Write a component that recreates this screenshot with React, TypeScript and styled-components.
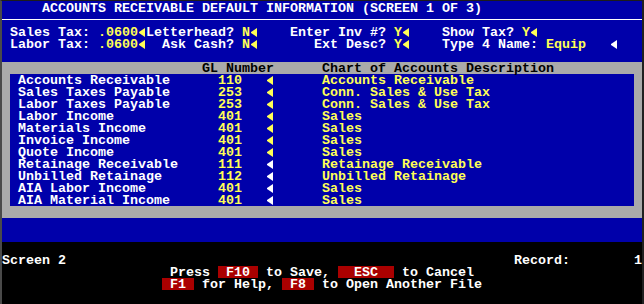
import React from 'react';
import styled, { createGlobalStyle } from 'styled-components';

// DOS text screen: 80 x 25 cells of 8 x 12 px
type Tone = 'white' | 'yellow' | 'black';

const tones: Record<Tone, string> = {
  white: '#ffffff',
  yellow: '#ffff55',
  black: '#000000',
};

const BLUE = '#0000aa';
const GRAY = '#aaaaaa';
const RED = '#aa0000';

const GlobalStyle = createGlobalStyle`
  html, body {
    margin: 0;
    padding: 0;
    background: #000;
  }
`;

const Frame = styled('div')`
  width: 644px;
  height: 304px;
  box-sizing: border-box;
  overflow: hidden;
  background: #000;
  border-top: 1px solid #1c1c1c;
  border-left: 2px solid #4a4a4a;
  border-right: 2px solid #202020;
  font-family: 'Liberation Mono', 'DejaVu Sans Mono', monospace;
  font-weight: bold;
  font-size: 13.333px;
  line-height: 12px;
  color: #fff;
`;

const Panel = styled('div')`
  background: ${BLUE};
  padding-top: 1px;
`;

const TextRow = styled('div')<{ $cols?: number; $bg?: string; $fg?: string }>`
  display: grid;
  grid-template-columns: repeat(${(p) => p.$cols ?? 80}, 8px);
  grid-template-rows: 12px;
  height: 12px;
  background: ${(p) => p.$bg ?? 'transparent'};
  color: ${(p) => p.$fg ?? '#fff'};
  white-space: pre;
`;

const Rule = styled('div')`
  height: 12px;
  position: relative;
  &::after {
    content: '';
    position: absolute;
    left: 0;
    right: 0;
    top: 5px;
    height: 1px;
    background: #fff;
  }
`;

const Blank = styled('div')<{ $rows?: number }>`
  height: ${(p) => (p.$rows ?? 1) * 12}px;
`;

const Txt = styled('span')<{ $at: number; $span: number; $tone?: Tone }>`
  grid-row: 1;
  grid-column: ${(p) => p.$at + 1} / span ${(p) => p.$span};
  padding-top: 1px;
  color: ${(p) => (p.$tone ? tones[p.$tone] : 'inherit')};
`;

const Arrow = styled('span')<{ $at: number; $tone?: Tone }>`
  grid-row: 1;
  grid-column: ${(p) => p.$at + 1} / span 1;
  align-self: start;
  justify-self: start;
  width: 0;
  height: 1px;
  margin: 2px 0 0 1px;
  border-top: 4px solid transparent;
  border-bottom: 4px solid transparent;
  border-right: 6px solid ${(p) => tones[p.$tone ?? 'white']};
`;

const KeyCap = styled('span')<{ $at: number; $span: number }>`
  grid-row: 1;
  grid-column: ${(p) => p.$at + 1} / span ${(p) => p.$span};
  padding-top: 1px;
  height: 11px;
  background: ${RED};
  color: #fff;
  text-align: center;
`;

const Table = styled('div')`
  background: ${GRAY};
`;

const TableBody = styled('div')`
  margin: 0 8px;
  background: ${BLUE};
`;

const TableFoot = styled('div')`
  height: 12px;
`;

const Status = styled('div')`
  background: #000;
`;

const T = ({ at, tone, children }: { at: number; tone?: Tone; children: string }) => (
  <Txt $at={at} $span={children.length} $tone={tone}>
    {children}
  </Txt>
);

const Key = ({ at, span, children }: { at: number; span: number; children: string }) => (
  <KeyCap $at={at} $span={span}>
    {children}
  </KeyCap>
);

const accounts: { label: string; gl: string; desc: string; active: boolean }[] = [
  { label: 'Accounts Receivable', gl: '110', desc: 'Accounts Receivable', active: true },
  { label: 'Sales Taxes Payable', gl: '253', desc: 'Conn. Sales & Use Tax', active: true },
  { label: 'Labor Taxes Payable', gl: '253', desc: 'Conn. Sales & Use Tax', active: true },
  { label: 'Labor Income', gl: '401', desc: 'Sales', active: true },
  { label: 'Materials Income', gl: '401', desc: 'Sales', active: true },
  { label: 'Invoice Income', gl: '401', desc: 'Sales', active: true },
  { label: 'Quote Income', gl: '401', desc: 'Sales', active: true },
  { label: 'Retainage Receivable', gl: '111', desc: 'Retainage Receivable', active: false },
  { label: 'Unbilled Retainage', gl: '112', desc: 'Unbilled Retainage', active: false },
  { label: 'AIA Labor Income', gl: '401', desc: 'Sales', active: false },
  { label: 'AIA Material Income', gl: '401', desc: 'Sales', active: false },
];

const App: React.FC = () => {
  return (
    <>
      <GlobalStyle />
      <Frame>
        <Panel>
          <TextRow>
            <T at={5}>ACCOUNTS RECEIVABLE DEFAULT INFORMATION (SCREEN 1 OF 3)</T>
          </TextRow>
          <Rule />
          <TextRow>
            <T at={1}>Sales Tax:</T>
            <T at={12} tone="yellow">.0600</T>
            <Arrow $at={17} $tone="yellow" />
            <T at={18}>Letterhead?</T>
            <T at={30} tone="yellow">N</T>
            <Arrow $at={31} $tone="yellow" />
            <T at={36}>Enter Inv #?</T>
            <T at={49} tone="yellow">Y</T>
            <Arrow $at={50} $tone="yellow" />
            <T at={55}>Show Tax?</T>
            <T at={65} tone="yellow">Y</T>
            <Arrow $at={66} $tone="yellow" />
          </TextRow>
          <TextRow>
            <T at={1}>Labor Tax:</T>
            <T at={12} tone="yellow">.0600</T>
            <Arrow $at={17} $tone="yellow" />
            <T at={20}>Ask Cash?</T>
            <T at={30} tone="yellow">N</T>
            <Arrow $at={31} $tone="yellow" />
            <T at={39}>Ext Desc?</T>
            <T at={49} tone="yellow">Y</T>
            <Arrow $at={50} $tone="yellow" />
            <T at={55}>Type 4 Name:</T>
            <T at={68} tone="yellow">Equip</T>
            <Arrow $at={76} />
          </TextRow>
          <Blank />
          <Table>
            <TextRow $fg="#000">
              <T at={25}>GL Number</T>
              <T at={40}>Chart of Accounts Description</T>
            </TextRow>
            <TableBody>
              {accounts.map((a) => (
                <TextRow key={a.label} $cols={78}>
                  <T at={1}>{a.label}</T>
                  <T at={26} tone="yellow">{a.gl}</T>
                  <Arrow $at={32} $tone={a.active ? 'yellow' : 'white'} />
                  <T at={39} tone="yellow">{a.desc}</T>
                </TextRow>
              ))}
            </TableBody>
            <TableFoot />
          </Table>
          <Blank $rows={2} />
        </Panel>
        <Status>
          <Blank />
          <TextRow>
            <T at={0}>Screen 2</T>
            <T at={64}>Record:</T>
            <T at={79}>1</T>
          </TextRow>
          <TextRow>
            <T at={21}>Press</T>
            <Key at={27} span={5}>F10</Key>
            <T at={33}>to Save,</T>
            <Key at={42} span={7}>ESC</Key>
            <T at={50}>to Cancel</T>
          </TextRow>
          <TextRow>
            <Key at={20} span={4}>F1</Key>
            <T at={25}>for Help,</T>
            <Key at={35} span={4}>F8</Key>
            <T at={40}>to Open Another File</T>
          </TextRow>
        </Status>
      </Frame>
    </>
  );
};

export default App;
